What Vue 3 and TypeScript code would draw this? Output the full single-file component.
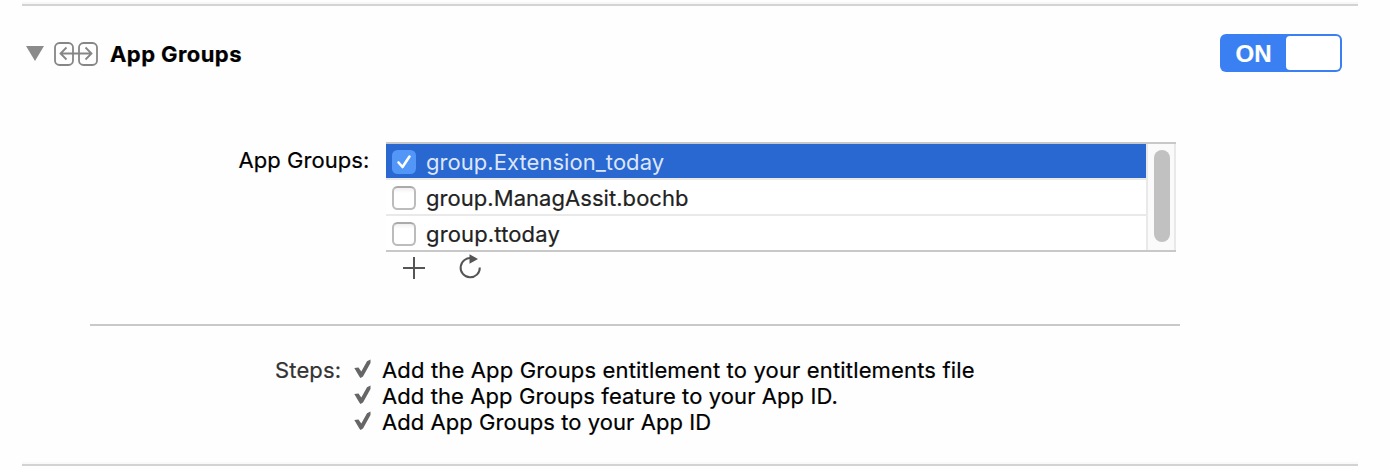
<script setup lang="ts">
import { ref } from 'vue'

interface Group {
  name: string
  checked: boolean
}

const enabled = ref<boolean>(true)
const groups = ref<Group[]>([
  { name: 'group.Extension_today', checked: true },
  { name: 'group.ManagAssit.bochb', checked: false },
  { name: 'group.ttoday', checked: false },
])
const steps: string[] = [
  'Add the App Groups entitlement to your entitlements file',
  'Add the App Groups feature to your App ID.',
  'Add App Groups to your App ID',
]
</script>

<template>
  <main class="panel">
    <header class="head">
      <svg class="disclosure" width="18" height="15" viewBox="0 0 18 15"><path d="M0 0H18L9 15Z" fill="#8b8b8b" /></svg>
      <svg class="glyph" width="44" height="24" viewBox="0 0 44 24" fill="none" stroke="#868686" stroke-width="1.800">
        <rect x="1" y="1" width="18" height="22" rx="4.500" />
        <rect x="25" y="1" width="18" height="22" rx="4.500" />
        <path d="M6 11.500H38M12.500 5.500L6.500 11.500L12.500 17.500M31.500 5.500L37.500 11.500L31.500 17.500" />
      </svg>
      <h1 class="title">App Groups</h1>
      <button class="toggle" type="button" @click="enabled = !enabled">
        <span class="state">{{ enabled ? 'ON' : 'OFF' }}</span>
        <span class="knob"></span>
      </button>
    </header>

    <section class="groups">
      <span class="label">App Groups:</span>
      <div class="table">
        <div class="rows">
          <div v-for="g in groups" :key="g.name" class="row" :class="{ selected: g.checked }">
            <span class="box">
              <svg v-if="g.checked" width="24" height="24" viewBox="0 0 24 24"><path d="M6.500 12.500L10.500 17L17.500 6.500" fill="none" stroke="#fff" stroke-width="2.600" stroke-linecap="round" stroke-linejoin="round" /></svg>
            </span>
            <span class="name">{{ g.name }}</span>
          </div>
        </div>
        <div class="track"><div class="thumb"></div></div>
      </div>
    </section>
    <div class="actions">
      <svg width="22" height="22" viewBox="0 0 22 22"><path d="M11 0V22M0 11H22" stroke="#555" stroke-width="2" /></svg>
      <svg class="refresh" width="24" height="26" viewBox="0 0 24 26">
        <path d="M13 4.300A9.600 9.600 0 1 0 20.800 13.500" fill="none" stroke="#555" stroke-width="2" />
        <path d="M10.500 0.300L19 5L10.500 9.800Z" fill="#555" />
      </svg>
    </div>

    <section class="steps">
      <span class="steps-label">Steps:</span>
      <ul>
        <li v-for="(s, i) in steps" :key="s">
          <svg width="18" height="20" viewBox="0 0 18 20"><path d="M0.300 9L4.500 8.500L7.300 12.500L13 2.200L16.500 0.500V4L9 17.500L6.500 19L5.300 17.500Z" fill="#666" /></svg>
          <span :class="'step-' + i">{{ s }}</span>
        </li>
      </ul>
    </section>
  </main>
</template>

<style>
body { background: #fefefe; }
</style>

<style scoped>
.panel {
  box-sizing: border-box;
  width: 1336px;
  height: 466px;
  margin-left: 22px;
  padding-top: 6px;
  background: linear-gradient(#f7f7f7, #f7f7f7) 0 2px / 100% 2px no-repeat,
    linear-gradient(#d3d3d3, #d3d3d3) 0 4px / 100% 2px no-repeat,
    linear-gradient(#f9f9f9, #f9f9f9) 0 462px / 100% 2px no-repeat,
    linear-gradient(#d3d3d3, #d3d3d3) 0 464px / 100% 2px no-repeat;
  font: 22px/26px Inter, "Liberation Sans", sans-serif;
  -webkit-text-stroke: 0.2px currentColor;
  color: #000;
  white-space: nowrap;
}
.head { display: flex; align-items: flex-start; height: 136px; }
.disclosure { margin: 40px 0 0 4px; }
.glyph { margin: 36px 0 0 10px; }
.title { margin: 35px 0 0 12px; font-size: 22px; line-height: 26px; font-weight: 700; letter-spacing: 0.42px; }
.toggle {
  display: flex;
  justify-content: space-between;
  box-sizing: border-box;
  width: 122px;
  height: 38px;
  margin: 28px 16px 0 auto;
  padding: 2px 2px 2px 15.5px;
  border: 0;
  border-radius: 6px;
  background: #3b80f2;
}
.state { font: bold 24px/36px "Liberation Sans", sans-serif; color: #fff; }
.knob { width: 54px; height: 34px; border-radius: 4px; background: #fff; }
.groups { display: flex; height: 110px; }
.label { box-sizing: border-box; width: 364px; padding: 5px 0 0 216.5px; letter-spacing: 0.05px; }
.table {
  display: flex;
  box-sizing: border-box;
  width: 790px;
  height: 110px;
  border-top: 2px solid #c8c8c8;
  border-bottom: 2px solid #c8c8c8;
}
.rows { width: 760px; background: #fff; }
.row {
  display: flex;
  align-items: center;
  box-sizing: border-box;
  height: 36px;
  padding-left: 6px;
  border-bottom: 2px solid #e9e9e9;
  color: #222;
}
.row:last-child { height: 34px; border-bottom: 0; letter-spacing: 0.15px; }
.row.selected { background: #2967d1 padding-box; color: #dce6f8; -webkit-text-stroke: 0; }
.box {
  box-sizing: border-box;
  width: 24px;
  height: 24px;
  margin: 2px 10px 0 0;
  border: 2px solid #bcbcbc;
  border-top-color: #aaa;
  border-radius: 5.5px;
  background: linear-gradient(#f0f0f0, #fff 5px);
}
.selected .box { border: 0; background: #5296f8; }
.box svg { display: block; }
.name { margin-top: 1px; letter-spacing: 0.05px; }
.row:last-child .name { letter-spacing: 0.15px; }
.track {
  box-sizing: border-box;
  width: 30px;
  padding: 6px;
  border: solid #e9e9e9;
  border-width: 0 2px;
  background: #fafafa;
}
.thumb { width: 16px; height: 92px; border-radius: 8px; background: #c1c1c1; }
.actions { display: flex; height: 72px; padding: 5px 0 0 381px; box-sizing: border-box; }
.refresh { margin: -3px 0 0 34px; }
.steps {
  display: flex;
  width: 1090px;
  margin-left: 68px;
  border-top: 2px solid #c9c9c9;
  padding-top: 31px;
  box-sizing: border-box;
}
.steps-label { width: 79px; margin-left: 185px; color: #333; letter-spacing: 0.15px; }
ul { margin: 0; padding: 0; list-style: none; }
li { display: flex; height: 26px; }
li svg { margin: 2px 10px 0 0; }
.step-0 { letter-spacing: 0.155px; }
.step-1 { letter-spacing: 0.09px; }
.step-2 { letter-spacing: 0.055px; }
</style>
